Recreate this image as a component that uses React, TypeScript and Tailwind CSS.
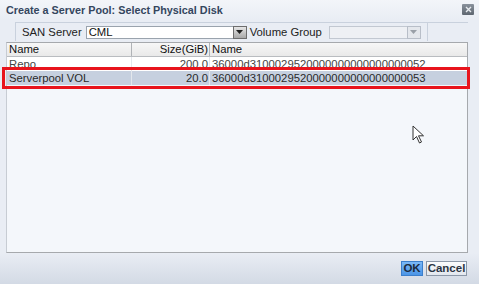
const rows = [
  { name: "Repo", size: "200.0", id: "36000d3100029520000000000000000052", selected: false },
  { name: "Serverpool VOL", size: "20.0", id: "36000d3100029520000000000000000053", selected: true },
]

const DropArrow = ({ disabled }: { disabled?: boolean }) => (
  <div
    className={`w-[14px] h-[13px] flex items-center justify-center border ${
      disabled ? "border-[#b8bec8] bg-[#e4e7ec]" : "border-[#6d6d6d] bg-gradient-to-b from-[#e6e6e6] to-[#a9a9a9]"
    }`}
  >
    <svg width="7" height="4" viewBox="0 0 7 4">
      <path d="M0 0 L7 0 L3.5 4 Z" fill={disabled ? "#9aa0a8" : "#222"} />
    </svg>
  </div>
)

const App = () => {
  return (
    <div className="relative w-[479px] h-[284px] flex flex-col bg-[#e9edf4] overflow-hidden text-[11.3px] text-[#2a2a2a] font-['Liberation_Sans',Arial,sans-serif]">
      {/* Title bar */}
      <div className="h-[20px] flex items-center justify-between pl-[6px] pr-[5px] bg-gradient-to-b from-[#f3f5f9] to-[#e9edf4]">
        <span className="font-bold text-[10.8px] text-[#34465e]">Create a Server Pool: Select Physical Disk</span>
        <div className="w-[12px] h-[11px] mb-[2px] rounded-[1px] bg-gradient-to-b from-[#8a929c] to-[#5e6670] flex items-center justify-center">
          <svg width="7" height="7" viewBox="0 0 7 7">
            <path d="M1 1 L6 6 M6 1 L1 6" stroke="#e8ecf0" strokeWidth="1.4" />
          </svg>
        </div>
      </div>

      {/* Toolbar */}
      <div className="ml-[15px] mr-[11px] mt-[2px] h-[19px] flex items-center border-t border-l border-[#c9d1dd]">
        <span className="pl-[6px] pr-[4px] text-[#222]">SAN Server</span>
        <div className="w-[161px] h-[13px] flex items-center justify-between bg-white border border-[#9aa3ad] border-r-0">
          <span className="pl-[2px] text-[#111]">CML</span>
          <DropArrow />
        </div>
        <span className="pl-[3px] pr-[7px] text-[#222]">Volume Group</span>
        <div className="w-[92px] h-[13px] flex items-center justify-end bg-[#eef0f4] border border-[#c2c8d1] border-r-0">
          <DropArrow disabled />
        </div>
        <div className="ml-[6px] self-stretch border-l border-[#c9d1dd]" />
      </div>

      {/* Table */}
      <div className="ml-[6px] mr-[11px] mt-[1px] flex-1 flex flex-col border border-[#a6a9ad] border-l-[#c7ccd3] bg-[#f4f7fb]">
        <div className="h-[14px] grid grid-cols-[125px_78px_1fr] bg-gradient-to-b from-[#f7f7f7] to-[#e9e9e9] border-b border-[#b9bcc0] text-[#111]">
          <div className="pl-[2px] border-r border-[#b0b3b7] leading-[13px]">Name</div>
          <div className="pr-[1px] text-right border-r border-[#b0b3b7] leading-[13px]">Size(GiB)</div>
          <div className="pl-[2px] leading-[13px]">Name</div>
        </div>
        {rows.map((r) => (
          <div
            key={r.id}
            className={`h-[14px] grid grid-cols-[125px_78px_1fr] leading-[14px] ${
              r.selected ? "bg-[#c6d0df] text-[#2a2a2a]" : "bg-white text-[#444]"
            }`}
          >
            <div className="pl-[2px] border-r border-[#e3e7ec]">{r.name}</div>
            <div className="pr-[1px] text-right border-r border-[#e3e7ec]">{r.size}</div>
            <div className="pl-[2px]">{r.id}</div>
          </div>
        ))}
      </div>

      {/* Footer */}
      <div className="h-[31px] flex items-center justify-end gap-[3px] pr-[12px] bg-gradient-to-b from-[#e9edf4] to-[#d3dae5]">
        <button className="w-[22px] h-[15px] flex items-center justify-center bg-gradient-to-b from-[#7ab8f7] to-[#4b95e6] border border-[#3c7fcc] font-bold text-[11.5px] text-[#1b2a3d]">
          OK
        </button>
        <button className="w-[41px] h-[15px] flex items-center justify-center bg-gradient-to-b from-[#fbfcfd] to-[#e2e7ee] border border-[#8c98a8] font-bold text-[11.5px] text-[#2b3442]">
          Cancel
        </button>
      </div>

      {/* Red highlight annotation */}
      <div className="absolute left-[2px] top-[67px] w-[468px] h-[22px] border-[3px] border-[#e8141c]" />

      {/* Mouse pointer */}
      <svg className="absolute left-[412px] top-[125px]" width="14" height="20" viewBox="0 0 14 20">
        <path
          d="M1 1 L1 15 L4.5 11.5 L7.5 18 L9.5 17 L6.5 10.8 L11.5 10.8 Z"
          fill="#fff"
          stroke="#333"
          strokeWidth="1"
          strokeLinejoin="round"
        />
      </svg>
    </div>
  )
}

export default App
